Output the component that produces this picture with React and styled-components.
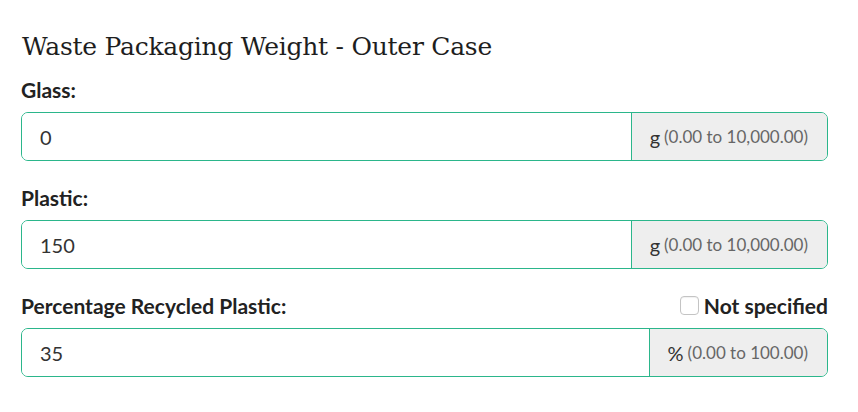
import React from 'react';
import styled, { createGlobalStyle } from 'styled-components';

const GlobalStyle = createGlobalStyle`
  html, body {
    margin: 0;
    padding: 0;
    background: #fff;
  }
  body {
    font-family: Lato, "Noto Sans", sans-serif;
    color: #222;
  }
  * {
    box-sizing: border-box;
  }
`;

const Panel = styled.section`
  padding: 32px 30px 20px 21px;
`;

const Title = styled.h2`
  margin: 0 0 14px 1px;
  font-family: "DejaVu Serif", "Liberation Serif", serif;
  font-weight: 400;
  font-size: 25px;
  letter-spacing: -0.25px;
  line-height: 30px;
  color: #1e1e1e;
`;

const Field = styled.div`
  margin-bottom: 23px;
`;

const LabelRow = styled.div`
  display: flex;
  align-items: center;
  justify-content: space-between;
  height: 26px;
  margin-bottom: 10px;
`;

const Label = styled.label`
  font-size: 21px;
  font-weight: 700;
  color: #222;
`;

const CheckLabel = styled.label`
  display: flex;
  align-items: center;
  gap: 5px;
  font-size: 21px;
  font-weight: 700;
  color: #222;
`;

const Box = styled.span`
  width: 19px;
  height: 19px;
  border: 1px solid #c4c4c4;
  border-radius: 4px;
  background: #fff;
  box-shadow: inset 0 1px 1px rgba(0, 0, 0, 0.06);
`;

const Group = styled.div`
  display: flex;
  height: 49px;
  border: 1px solid #2bb68b;
  border-radius: 7px;
  overflow: hidden;
`;

const Input = styled.input`
  flex: 1;
  min-width: 0;
  border: 0;
  outline: none;
  padding: 0 18px;
  font-family: Lato, "Noto Sans", sans-serif;
  font-size: 20px;
  color: #333;
  background: #fff;
`;

const Addon = styled.div`
  display: flex;
  align-items: center;
  gap: 4px;
  padding: 0 19px 0 18px;
  border-left: 1px solid #2bb68b;
  background: #eee;
`;

const Unit = styled.span`
  font-size: 20px;
  color: #333;
`;

const Range = styled.span`
  font-size: 17px;
  color: #666;
`;

const fields = [
  { label: 'Glass:', value: '0', unit: 'g', range: '(0.00 to 10,000.00)' },
  { label: 'Plastic:', value: '150', unit: 'g', range: '(0.00 to 10,000.00)' },
  {
    label: 'Percentage Recycled Plastic:',
    value: '35',
    unit: '%',
    range: '(0.00 to 100.00)',
    optional: true,
  },
];

export default function App() {
  return (
    <>
      <GlobalStyle />
      <Panel>
        <Title>Waste Packaging Weight - Outer Case</Title>
        {fields.map(f => (
          <Field key={f.label}>
            <LabelRow>
              <Label>{f.label}</Label>
              {f.optional && (
                <CheckLabel>
                  <Box />
                  Not specified
                </CheckLabel>
              )}
            </LabelRow>
            <Group>
              <Input defaultValue={f.value} />
              <Addon>
                <Unit>{f.unit}</Unit>
                <Range>{f.range}</Range>
              </Addon>
            </Group>
          </Field>
        ))}
      </Panel>
    </>
  );
}
